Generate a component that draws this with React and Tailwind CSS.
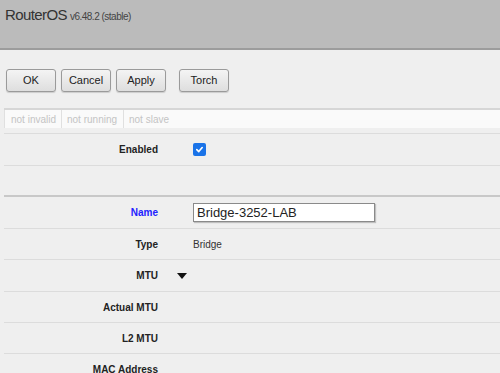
import React from "react";

const Row = ({ label, children, blue, h = "h-[31px]" }) => (
  <div className={`flex items-center ${h} border-b border-[#dcdcdc]`}>
    <div className={`w-[154px] text-right text-[10px] font-bold ${blue ? "text-[#2222ff]" : "text-[#222]"}`}>{label}</div>
    <div className="ml-[35px] flex items-center text-[10px] text-[#333]">{children}</div>
  </div>
);

const Btn = ({ children, className = "" }) => (
  <button className={`h-[23px] w-[50px] rounded-[3px] border border-[#9a9a9a] bg-gradient-to-b from-[#f4f4f4] to-[#dedede] text-[11px] text-[#222] shadow-[0_1px_1px_rgba(0,0,0,0.15)] ${className}`}>{children}</button>
);

export default function App() {
  return (
    <div className="w-[500px] h-[373px] overflow-hidden bg-[#efefef]" style={{ fontFamily: '"Liberation Sans", Arial, sans-serif' }}>
      <div className="h-[50px] bg-[#bbbbbb] border-b-2 border-[#9c9c9c] px-[5px] pt-[4px] flex items-baseline">
        <span className="text-[15px] text-[#333] tracking-[-0.6px]">RouterOS</span>
        <span className="ml-[3px] text-[10px] text-[#444] tracking-[-0.5px]">v6.48.2 (stable)</span>
      </div>
      <div className="flex items-center pl-[6px] pt-[19px] gap-[5px]">
        <Btn>OK</Btn>
        <Btn>Cancel</Btn>
        <Btn>Apply</Btn>
        <Btn className="ml-[8px]">Torch</Btn>
      </div>
      <div className="mt-[16px] ml-[4px] h-[20px] flex border-t-2 border-[#d6d6d6] bg-[#fafafa] text-[10px] text-[#c4c4c4]">
        <div className="w-[58px] border-l border-r border-[#e0e0e0] flex items-center pl-[6px]">not invalid</div>
        <div className="w-[62px] border-r border-[#e0e0e0] flex items-center pl-[5px]">not running</div>
        <div className="flex items-center pl-[5px]">not slave</div>
      </div>
      <div className="ml-[4px] mt-[5px] border-t border-[#dcdcdc]">
        <Row label="Enabled" h="h-[32px]">
          <div className="w-[13px] h-[13px] rounded-[2px] bg-[#1a73e8] flex items-center justify-center">
            <svg width="9" height="9" viewBox="0 0 10 10"><path d="M2 5.2 L4.2 7.3 L8 2.8" stroke="#fff" strokeWidth="1.8" fill="none" strokeLinecap="round" strokeLinejoin="round" /></svg>
          </div>
        </Row>
        <div className="h-[31px] border-b-2 border-[#c8c8c8]" />
        <Row label="Name" blue h="h-[32px]">
          <div className="w-[182px] h-[19px] bg-white border border-[#8a8a8a] shadow-[1px_1px_1px_rgba(0,0,0,0.2)] flex items-center pl-[3px] text-[13px] text-[#222]">Bridge-3252-LAB</div>
        </Row>
        <Row label="Type">Bridge</Row>
        <div className="flex items-center h-[32px] border-b border-[#dcdcdc]">
          <div className="w-[154px] text-right text-[10px] font-bold text-[#222]">MTU</div>
          <svg className="ml-[19px]" width="10" height="6" viewBox="0 0 10 6"><path d="M0 0 H10 L5 6 Z" fill="#111" /></svg>
        </div>
        <Row label="Actual MTU" />
        <Row label="L2 MTU" />
        <Row label="MAC Address" />
      </div>
    </div>
  );
}
